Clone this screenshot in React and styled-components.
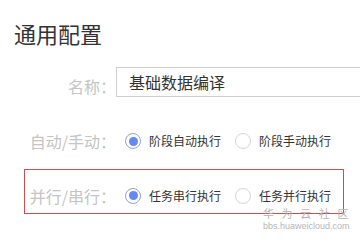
import React, { useState } from "react";
import styled, { createGlobalStyle } from "styled-components";

const GlobalStyle = createGlobalStyle`
  body {
    margin: 0;
    background: #fff;
    font-family: "Noto Sans CJK SC", "Liberation Sans", sans-serif;
    overflow: hidden;
  }
`;

const Page = styled.div`
  position: relative;
  width: 360px;
  height: 240px;
  overflow: hidden;
`;

const Title = styled.h1`
  margin: 22px 0 0 14px;
  font-size: 22px;
  line-height: 22px;
  font-weight: 400;
  color: #333;
`;

const Form = styled.div`
  margin-top: 23px;
  padding-left: 24px;
  display: flex;
  flex-direction: column;
`;

const Row = styled.div`
  display: flex;
  align-items: center;
  box-sizing: border-box;
  height: ${(p) => p.$height || 30}px;
  margin-top: ${(p) => p.$gap || 0}px;
  padding-top: ${(p) => p.$padTop || 0}px;
  border: 1px solid ${(p) => (p.$highlight ? "#cf4a52" : "transparent")};
  width: 320px;
`;

const Label = styled.div`
  width: 91px;
  flex-shrink: 0;
  text-align: right;
  white-space: nowrap;
  font-size: 16px;
  line-height: 16px;
  color: #c4c4c4;
  padding-top: ${(p) => p.$offset || 0}px;
`;

const Input = styled.input`
  box-sizing: border-box;
  width: 260px;
  height: 30px;
  flex-shrink: 0;
  border: 1px solid #cfcfcf;
  padding: 0 0 0 12px;
  font-family: inherit;
  font-size: 16px;
  color: #333;
  outline: none;
`;

const Options = styled.div`
  display: flex;
  flex-shrink: 0;
  margin-left: 9px;
`;

const Option = styled.label`
  display: flex;
  align-items: center;
  gap: 8px;
  margin-right: 14px;
  font-size: 12px;
  line-height: 16px;
  white-space: nowrap;
  color: #333;
  cursor: pointer;
`;

const Circle = styled.span`
  box-sizing: border-box;
  width: 16px;
  height: 16px;
  flex-shrink: 0;
  border-radius: 50%;
  border: 1px solid ${(p) => (p.$on ? "#8fa3d6" : "#d6d6d6")};
  background: #fff;
  display: flex;
  align-items: center;
  justify-content: center;

  &::after {
    content: "";
    width: 9px;
    height: 9px;
    border-radius: 50%;
    background: ${(p) => (p.$on ? "#6688f2" : "transparent")};
  }
`;

const Watermark = styled.div`
  position: absolute;
  left: 263px;
  top: 207px;
  display: flex;
  flex-direction: column;
  align-items: flex-start;
  color: #b5b5b5;
`;

const MarkName = styled.div`
  font-size: 11px;
  line-height: 12px;
  letter-spacing: 7.6px;
`;

const MarkUrl = styled.div`
  font-family: "Liberation Sans", sans-serif;
  font-size: 9px;
  line-height: 12px;
  margin-top: 1px;
`;

const RadioGroup = ({ items, value, onChange }) => (
  <Options>
    {items.map((item) => (
      <Option key={item} onClick={() => onChange(item)}>
        <Circle $on={value === item} />
        {item}
      </Option>
    ))}
  </Options>
);

const App = () => {
  const [mode, setMode] = useState("阶段自动执行");
  const [order, setOrder] = useState("任务串行执行");

  return (
    <Page>
      <GlobalStyle />
      <Title>通用配置</Title>
      <Form>
        <Row>
          <Label $offset={8}>名称：</Label>
          <Input defaultValue="基础数据编译" />
        </Row>
        <Row $gap={29}>
          <Label>自动/手动：</Label>
          <RadioGroup
            items={["阶段自动执行", "阶段手动执行"]}
            value={mode}
            onChange={setMode}
          />
        </Row>
        <Row $gap={13} $height={45} $padTop={8} $highlight>
          <Label>并行/串行：</Label>
          <RadioGroup
            items={["任务串行执行", "任务并行执行"]}
            value={order}
            onChange={setOrder}
          />
        </Row>
      </Form>
      <Watermark>
        <MarkName>华为云社区</MarkName>
        <MarkUrl>bbs.huaweicloud.com</MarkUrl>
      </Watermark>
    </Page>
  );
};

export default App;
